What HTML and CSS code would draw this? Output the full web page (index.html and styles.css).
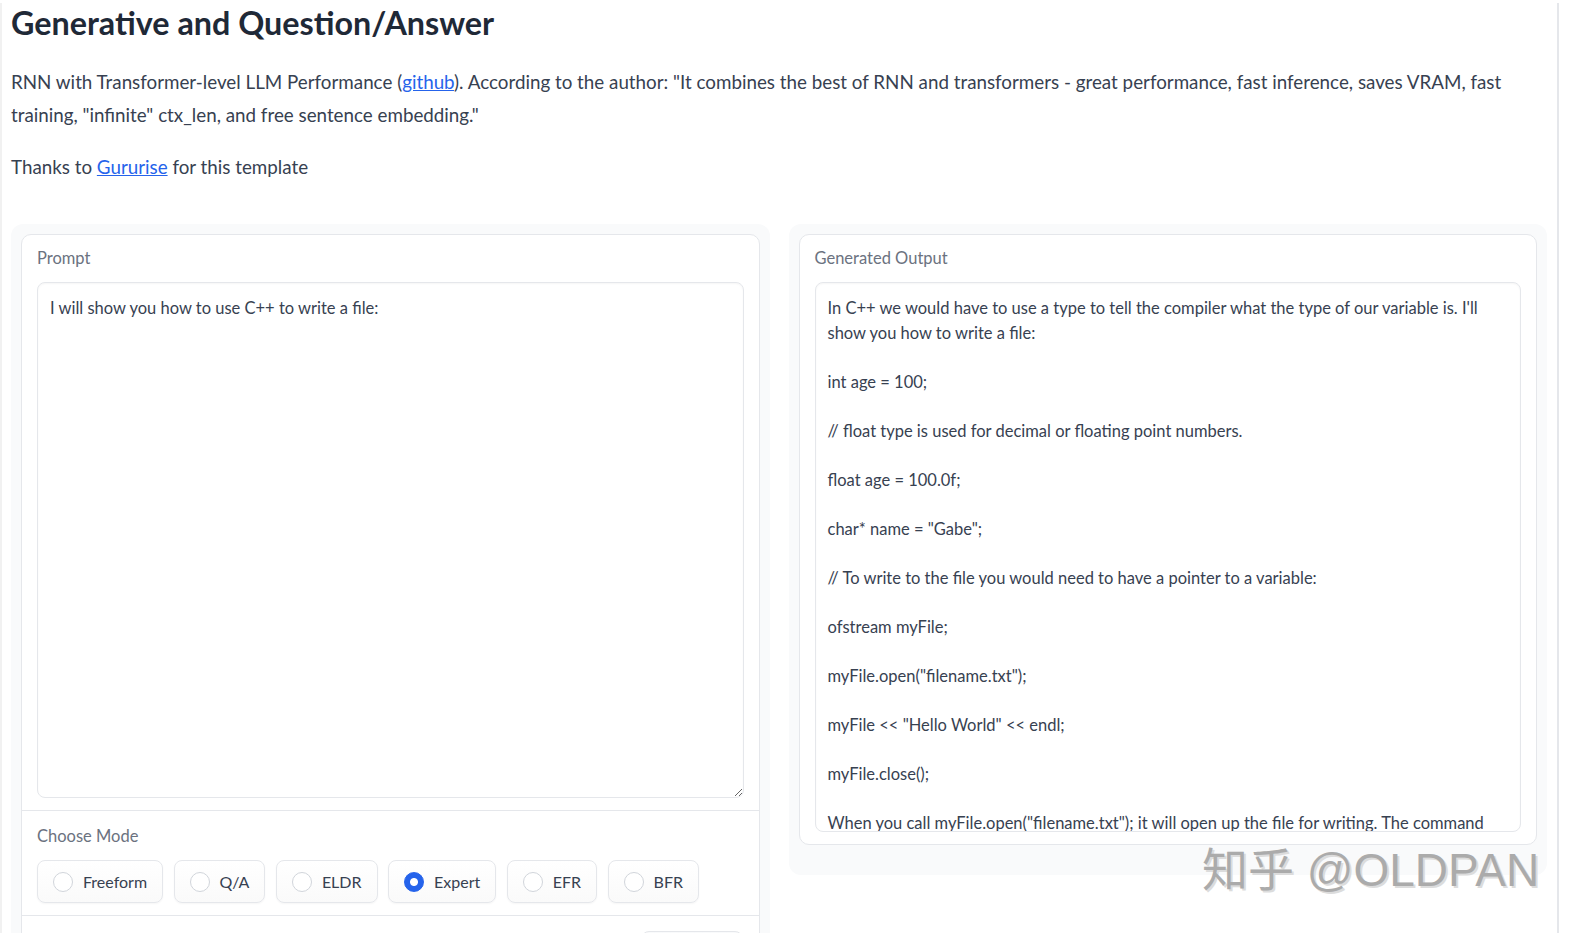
FILE: index.html
```html
<!DOCTYPE html>
<html>
<head>
  <meta charset="UTF-8">
  <title>Generative and Question/Answer</title>
  <link rel="stylesheet" href="styles.css">
</head>
<body>
  <div class="app">
    <div class="intro">
      <h1>Generative and Question/Answer</h1>
      <p>RNN with Transformer-level LLM Performance (<a href="#">github</a>). According to the author: "It combines the best of RNN and transformers - great performance, fast inference, saves VRAM, fast training, "infinite" ctx_len, and free sentence embedding."</p>
      <p>Thanks to <a href="#">Gururise</a> for this template</p>
    </div>

    <div class="row">
      <!-- input column -->
      <div class="panel">
        <div class="form">
          <label class="block">
            <span class="label">Prompt</span>
            <textarea class="input prompt">I will show you how to use C++ to write a file:</textarea>
          </label>
          <div class="block">
            <span class="label">Choose Mode</span>
            <div class="radios">
              <label class="radio"><input type="radio" name="mode"> Freeform</label>
              <label class="radio"><input type="radio" name="mode"> Q/A</label>
              <label class="radio"><input type="radio" name="mode"> ELDR</label>
              <label class="radio"><input type="radio" name="mode" checked> Expert</label>
              <label class="radio"><input type="radio" name="mode"> EFR</label>
              <label class="radio"><input type="radio" name="mode"> BFR</label>
            </div>
          </div>
          <div class="block actions">
            <button class="button">Submit</button>
          </div>
        </div>
      </div>

      <!-- output column -->
      <div class="panel panel-out">
        <div class="form">
          <label class="block">
            <span class="label">Generated Output</span>
            <textarea class="input output" readonly>In C++ we would have to use a type to tell the compiler what the type of our variable is. I'll show you how to write a file:

int age = 100;

// float type is used for decimal or floating point numbers.

float age = 100.0f;

char* name = "Gabe";

// To write to the file you would need to have a pointer to a variable:

ofstream myFile;

myFile.open("filename.txt");

myFile << "Hello World" << endl;

myFile.close();

When you call myFile.open("filename.txt"); it will open up the file for writing. The command will create the file if it does not exist yet.</textarea>
          </label>
        </div>
      </div>
    </div>

    <div class="watermark">知乎 @OLDPAN</div>
  </div>
</body>
</html>
```

FILE: styles.css
```css
body {
  margin: 0;
  font-family: Lato, "Noto Sans", sans-serif;
  color: #374151;
  background: #fff;
}
.app {
  position: relative;
  box-sizing: border-box;
  width: 1559px;
  min-height: 933px;
  padding: 0 10px 0 9px;
  border-left: 2px solid #f1f1f1;
  border-right: 2px solid #e5e7eb;
}
h1 {
  margin: 3px 0 0;
  font-size: 32.3px;
  line-height: 40px;
  font-weight: 700;
  color: #1f2937;
}
.intro p {
  margin: 19px 0 0;
  font-size: 18.8px;
  line-height: 33px;
}
.intro h1 + p {
  margin-top: 22px;
}
.intro a {
  color: #2563eb;
}
.row {
  display: flex;
  align-items: flex-start;
  gap: 19px;
  margin-top: 41px;
}
.panel {
  flex: 1;
  padding: 10px;
  background: #f9fafb;
  border-radius: 12px;
}
.panel-out {
  padding-bottom: 30px;
}
.form {
  background: #fff;
  border: 1px solid #e5e7eb;
  border-radius: 10px;
}
.block {
  display: block;
  padding: 13px 15px 12px;
}
.block + .block {
  border-top: 1px solid #e5e7eb;
  padding-top: 15px;
}
.label {
  display: block;
  margin-bottom: 14px;
  font-size: 16.5px;
  line-height: 20px;
  color: #6b7280;
}
.input {
  display: block;
  box-sizing: border-box;
  width: 100%;
  margin: 0;
  padding: 13px 12px 11px;
  border: 1px solid #e5e7eb;
  border-radius: 8px;
  font-family: Lato, "Noto Sans", sans-serif;
  font-size: 16.5px;
  line-height: 24.5px;
  color: #374151;
  box-shadow: inset 0 1px 2px rgba(0, 0, 0, 0.04);
  outline: none;
}
.prompt {
  height: 516px;
  resize: vertical;
}
.output {
  height: 550px;
  resize: none;
  overflow: hidden;
}
.radios {
  display: flex;
  gap: 10.5px;
}
.radio {
  display: flex;
  align-items: center;
  gap: 10px;
  height: 43px;
  box-sizing: border-box;
  padding: 0 15px;
  border: 1px solid #e5e7eb;
  border-radius: 8px;
  background: linear-gradient(#fff, #fafafa);
  box-shadow: 0 1px 2px rgba(0, 0, 0, 0.04);
  font-size: 16px;
  color: #374151;
}
.radio input {
  appearance: none;
  width: 20px;
  height: 20px;
  margin: 0;
  border: 1px solid #d1d5db;
  border-radius: 50%;
  background: #fff;
}
.radio input:checked {
  border-color: #2563eb;
  background: radial-gradient(circle, #fff 3.5px, #2563eb 4.5px);
}
.actions {
  display: flex;
  justify-content: flex-end;
  padding-right: 16px;
}
.button {
  width: 102px;
  height: 40px;
  border: 1px solid #e5e7eb;
  border-radius: 8px;
  background: linear-gradient(#f9fafb, #f3f4f6);
  font-family: Lato, sans-serif;
  font-size: 16px;
  color: #374151;
}
.watermark {
  position: absolute;
  left: 1200px;
  top: 843px;
  font-family: "Liberation Sans", "Noto Sans CJK SC", sans-serif;
  font-size: 46px;
  line-height: 48px;
  color: #ababab;
  text-shadow: 2px 2px 0 #dcdcdc;
  white-space: nowrap;
}
```
